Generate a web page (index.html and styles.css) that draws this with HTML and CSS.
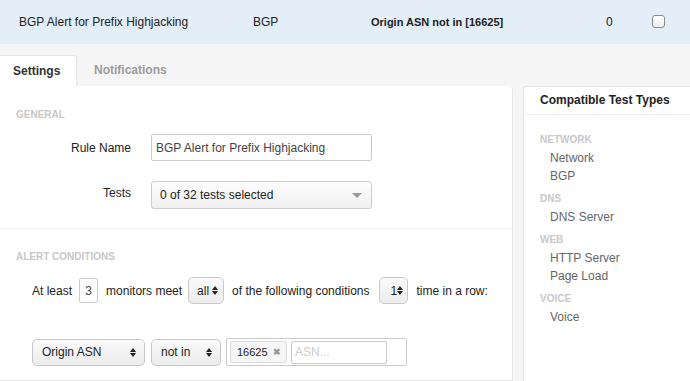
FILE: index.html
```html
<!DOCTYPE html>
<html lang="en">
<head>
    <meta charset="UTF-8">
    <title>Alert Rule</title>
    <link rel="stylesheet" href="styles.css">
</head>
<body>
    <div class="summary">
        <div class="col-name">BGP Alert for Prefix Highjacking</div>
        <div class="col-type">BGP</div>
        <div class="col-cond">Origin ASN not in [16625]</div>
        <div class="col-count">0</div>
        <div class="col-check"><span class="checkbox"></span></div>
    </div>

    <div class="editor">
        <div class="tabs">
            <div class="tab active">Settings</div>
            <div class="tab">Notifications</div>
        </div>

        <div class="columns">
            <div class="main">
                <div class="section general">
                    <div class="section-title">General</div>
                    <div class="form-row">
                        <label>Rule Name</label>
                        <input class="text-input" type="text" value="BGP Alert for Prefix Highjacking">
                    </div>
                    <div class="form-row">
                        <label class="raised">Tests</label>
                        <div class="dropdown">
                            <span>0 of 32 tests selected</span>
                            <span class="caret"></span>
                        </div>
                    </div>
                </div>

                <div class="section conditions">
                    <div class="section-title">Alert Conditions</div>
                    <div class="sentence">
                        <span>At least</span>
                        <span class="num-box">3</span>
                        <span>monitors meet</span>
                        <div class="select select-all">all<span class="updown"></span></div>
                        <span>of the following conditions</span>
                        <div class="select select-times">1<span class="updown"></span></div>
                        <span>time in a row:</span>
                    </div>
                    <div class="rule">
                        <div class="select select-metric">Origin ASN<span class="updown"></span></div>
                        <div class="select select-op">not in<span class="updown"></span></div>
                        <div class="tag-box">
                            <span class="tag">16625 <b>&#x2716;</b></span>
                            <input class="tag-input" type="text" placeholder="ASN...">
                        </div>
                    </div>
                </div>
            </div>

            <div class="sidebar">
                <div class="sidebar-head">Compatible Test Types</div>
                <div class="sidebar-body">
                    <div class="group">Network</div>
                    <div class="item">Network</div>
                    <div class="item">BGP</div>
                    <div class="group">DNS</div>
                    <div class="item">DNS Server</div>
                    <div class="group">Web</div>
                    <div class="item">HTTP Server</div>
                    <div class="item">Page Load</div>
                    <div class="group">Voice</div>
                    <div class="item">Voice</div>
                </div>
            </div>
        </div>
    </div>
</body>
</html>
```

FILE: styles.css
```css
body {
    margin: 0;
    font-family: "Liberation Sans", Arial, sans-serif;
    font-size: 12px;
    color: #333;
    background: #f5f5f5;
}

/* top summary row */
.summary {
    display: flex;
    align-items: center;
    height: 44px;
    background: #e3eef8;
    border-bottom: 1px solid #e6ecf1;
    box-sizing: border-box;
    color: #222;
}
.col-name { width: 234px; padding-left: 19px; }
.col-type { width: 118px; }
.col-cond { width: 235px; font-weight: bold; font-size: 11px; }
.col-count { width: 46px; }
.col-check { display: flex; }
.checkbox {
    width: 11px;
    height: 11px;
    border: 1px solid #8a8a8a;
    border-radius: 3px;
    background: linear-gradient(#fff, #ececec);
}

/* tabs */
.editor {
    padding-top: 11px;
}
.tabs {
    display: flex;
    height: 31px;
}
.tab {
    padding: 0 13px;
    line-height: 31px;
    font-weight: bold;
    color: #9c9c9c;
    margin-left: 4px;
}
.tab.active {
    width: 77px;
    box-sizing: border-box;
    margin-left: 0;
    background: #fff;
    color: #333;
    border: 1px solid #e6e6e6;
    border-left: none;
    border-bottom: none;
    border-radius: 0 4px 0 0;
}

.columns {
    display: flex;
    gap: 10px;
    height: 295px;
}
.main {
    width: 512px;
    background: #fff;
    border-right: 1px solid #e6e6e6;
    border-bottom: 1px solid #e6e6e6;
    border-radius: 0 4px 0 0;
}
.section {
    padding: 23px 16px 19px;
    border-bottom: 1px solid #eee;
}
.section.conditions {
    padding-top: 22px;
    border-bottom: none;
}
.section-title {
    font-size: 10px;
    font-weight: bold;
    color: #c8c8c8;
    text-transform: uppercase;
    line-height: 12px;
}

/* general form */
.form-row {
    display: flex;
    align-items: center;
    gap: 20px;
    margin-top: 13px;
}
.form-row + .form-row {
    margin-top: 20px;
}
.form-row label {
    width: 115px;
    text-align: right;
    color: #222;
}
.form-row label.raised {
    margin-top: -5px;
}
.text-input {
    width: 221px;
    height: 27px;
    box-sizing: border-box;
    border: 1px solid #ccc;
    border-radius: 2px;
    padding: 0 4px;
    font: inherit;
    color: #444;
}
.dropdown {
    width: 221px;
    height: 28px;
    box-sizing: border-box;
    border: 1px solid #ccc;
    border-radius: 3px;
    padding: 0 9px 0 8px;
    background: linear-gradient(#fdfdfd, #f0f0f0);
    display: flex;
    align-items: center;
    justify-content: space-between;
    color: #222;
}
.caret {
    width: 0;
    height: 0;
    border-left: 5px solid transparent;
    border-right: 5px solid transparent;
    border-top: 5px solid #999;
}

/* alert conditions */
.sentence {
    display: flex;
    align-items: center;
    margin-top: 14px;
    padding-left: 16px;
    height: 27px;
    color: #222;
    white-space: nowrap;
}
.num-box {
    width: 19px;
    height: 25px;
    box-sizing: border-box;
    border: 1px solid #ccc;
    border-radius: 2px;
    display: flex;
    align-items: center;
    justify-content: center;
    margin: 0 8px 0 7px;
    color: #444;
    flex-shrink: 0;
}
.select {
    height: 27px;
    box-sizing: border-box;
    border: 1px solid #c8c8c8;
    border-radius: 5px;
    background: linear-gradient(#fafafa, #ececec);
    display: flex;
    align-items: center;
    justify-content: space-between;
    padding: 0 5px 0 9px;
    color: #222;
    flex-shrink: 0;
}
.select-all { width: 36px; margin: 0 8px 0 6px; padding-left: 8px; }
.select-times { width: 29px; margin: 0 8px 0 10px; padding-left: 10px; }
.select-metric { width: 113px; padding-left: 9px; padding-right: 8px; }
.select-op { width: 70px; margin-left: 6px; padding-left: 9px; padding-right: 8px; }
.updown {
    display: flex;
    flex-direction: column;
    gap: 1px;
}
.updown::before,
.updown::after {
    content: "";
    border-left: 3px solid transparent;
    border-right: 3px solid transparent;
}
.updown::before { border-bottom: 4px solid #222; }
.updown::after { border-top: 4px solid #222; }

.rule {
    display: flex;
    align-items: center;
    margin-top: 34px;
    padding-left: 16px;
}
.tag-box {
    width: 181px;
    height: 28px;
    box-sizing: border-box;
    border: 1px solid #ccc;
    border-radius: 2px;
    margin-left: 5px;
    display: flex;
    align-items: center;
    padding-left: 3px;
    gap: 4px;
}
.tag {
    height: 22px;
    box-sizing: border-box;
    border: 1px solid #ddd;
    border-radius: 2px;
    background: #f6f6f6;
    padding: 0 5px 0 6px;
    display: flex;
    align-items: center;
    font-size: 11px;
    color: #222;
    width: 57px;
    justify-content: space-between;
}
.tag b {
    color: #999;
    font-size: 9px;
}
.tag-input {
    width: 96px;
    height: 23px;
    box-sizing: border-box;
    border: 1px solid #ccc;
    border-radius: 2px;
    padding: 0 3px;
    font: inherit;
}
.tag-input::placeholder { color: #ccc; }

/* sidebar */
.sidebar {
    flex: 1;
    background: #fff;
    border-left: 1px solid #e6e6e6;
    border-top: 1px solid #e6e6e6;
    border-radius: 4px 0 0 0;
}
.sidebar-head {
    height: 28px;
    line-height: 27px;
    padding-left: 16px;
    font-weight: bold;
    color: #222;
    border-bottom: 1px solid #eee;
    box-sizing: border-box;
}
.sidebar-body {
    padding: 19px 16px;
}
.group {
    font-size: 10px;
    font-weight: bold;
    color: #c8c8c8;
    text-transform: uppercase;
    line-height: 12px;
    margin: 8px 0 3px;
}
.group:first-child { margin-top: 0; }
.item {
    padding-left: 10px;
    line-height: 18px;
    color: #666;
}
```
